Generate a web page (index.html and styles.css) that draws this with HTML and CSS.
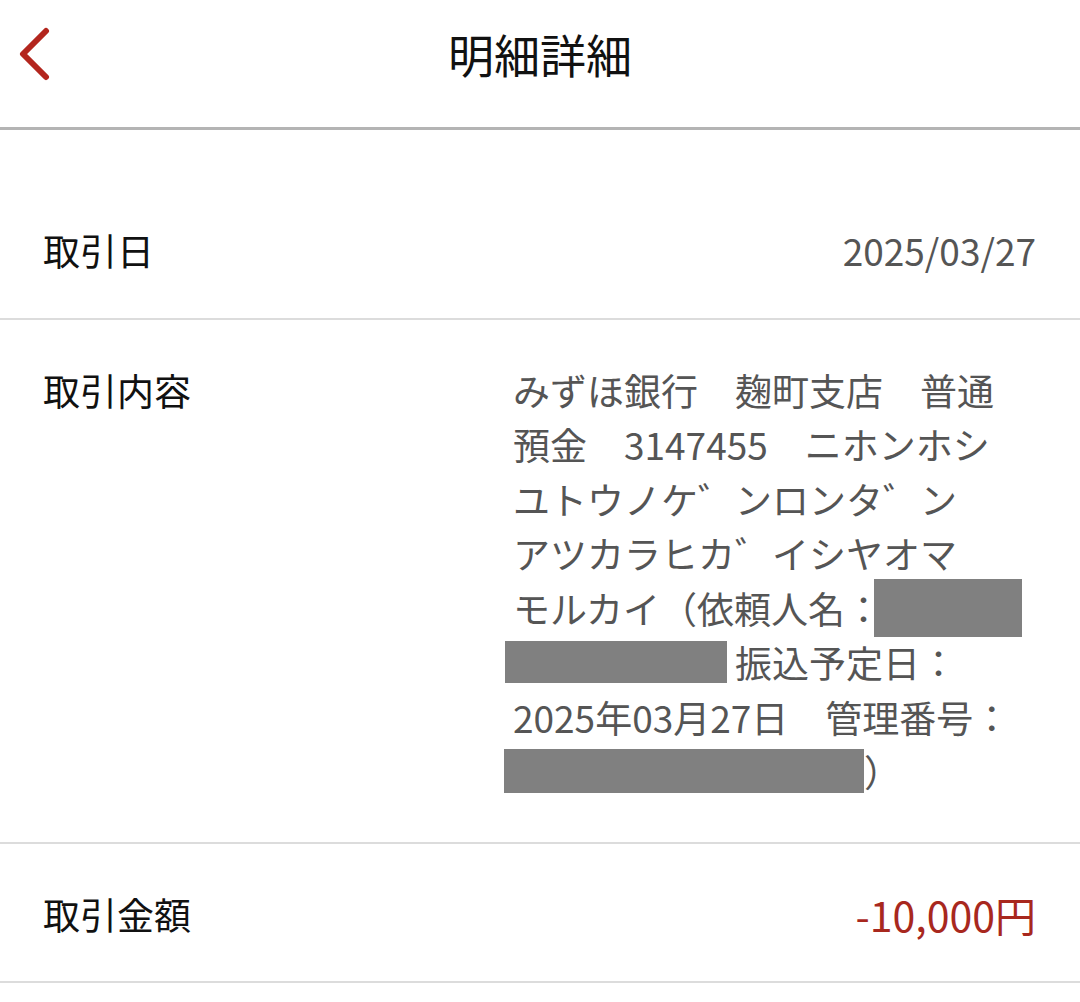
FILE: index.html
```html
<!DOCTYPE html>
<html lang="ja">
<head>
<meta charset="utf-8">
<title>明細詳細</title>
<link rel="stylesheet" href="styles.css">
</head>
<body>
<header class="topbar">
  <a class="back" href="#" aria-label="戻る">
    <svg width="40" height="60" viewBox="0 0 40 60"><path d="M28 4 L5 27 L28 50" fill="none" stroke="#b3261e" stroke-width="6" stroke-linecap="round" stroke-linejoin="round"/></svg>
  </a>
  <h1 class="title">明細詳細</h1>
  <span class="spacer"></span>
</header>
<main class="detail">
  <div class="row">
    <div class="label">取引日</div>
    <div class="value">2025/03/27</div>
  </div>
  <div class="row row-top">
    <div class="label">取引内容</div>
    <div class="value desc">みずほ銀行　麹町支店　普通<br>預金　3147455　ニホンホシ<br>ユトウノケ゛ンロンタ゛ン<br>アツカラヒカ゛イシヤオマ<br>モルカイ（依頼人名：<span class="mask mask-a"></span><br><span class="mask mask-b"></span>振込予定日：<br>2025年03月27日　管理番号：<br><span class="mask mask-c"></span>）</div>
  </div>
  <div class="row">
    <div class="label">取引金額</div>
    <div class="value amount">-10,000円</div>
  </div>
</main>
</body>
</html>
```
FILE: styles.css
```css
* { box-sizing: border-box; }
html, body { margin: 0; padding: 0; background: #fff; }
body {
  font-family: "Noto Sans CJK JP", "Noto Sans", sans-serif;
  color: #111;
}
.topbar {
  display: grid;
  grid-template-columns: 1fr auto 1fr;
  align-items: center;
  height: 130px;
  border-bottom: 3px solid #b4b4b4;
}
.back {
  display: flex;
  align-items: center;
  padding-left: 18px;
  padding-bottom: 14px;
}
.title {
  margin: 0;
  font-size: 46px;
  font-weight: 400;
  color: #111;
  line-height: 1;
  padding-bottom: 22px;
}
.detail {
  padding-top: 50px;
}
.row {
  display: flex;
  justify-content: space-between;
  align-items: center;
  padding: 43px 44px 40px 43px;
  border-bottom: 2px solid #dcdcdc;
  font-size: 37px;
  line-height: 54.5px;
}
.row-top {
  align-items: flex-start;
  padding-bottom: 43px;
}
.label { color: #111; }
.value { color: #555; }
.desc { width: 523px; }
.amount {
  color: #a8281e;
  font-size: 41px;
}
.mask {
  display: inline-block;
  background: #808080;
  vertical-align: top;
}
.mask-a { width: 148px; height: 58px; margin: -2px 0 -2px -8px; }
.mask-b { width: 222px; height: 42px; margin: 6px 8px 0 -8px; }
.mask-c { width: 360px; height: 44px; margin: 5px 0 0 -9px; }
```
